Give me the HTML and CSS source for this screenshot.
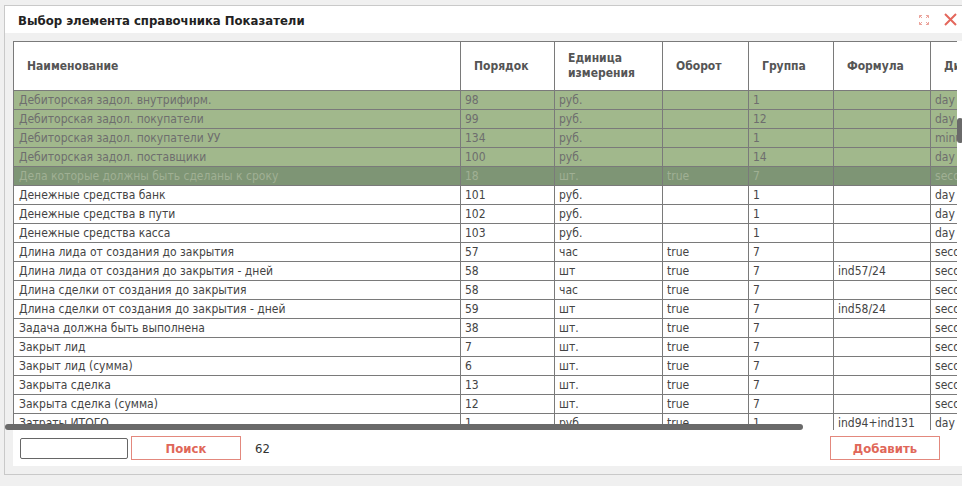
FILE: index.html
```html
<!DOCTYPE html>
<html lang="ru">
<head>
<meta charset="utf-8">
<title>Выбор элемента справочника Показатели</title>
<link rel="stylesheet" href="styles.css">
</head>
<body>
<div class="dialog">
  <div class="titlebar">
    <div class="title">Выбор элемента справочника Показатели</div>
    <div class="tools">
      <svg class="ico-expand" width="12" height="12" viewBox="0 0 12 12">
        <g fill="none" stroke="#eba39b" stroke-width="1">
          <path d="M1.5 4V1.5H4M1.5 1.5l2.5 2.5"/>
          <path d="M8 1.5h2.5V4M10.5 1.5L8 4"/>
          <path d="M1.5 8v2.5H4M1.5 10.5L4 8"/>
          <path d="M8 10.5h2.5V8M10.5 10.5L8 8"/>
        </g>
      </svg>
      <svg class="ico-close" width="13" height="13" viewBox="0 0 13 13">
        <path d="M1 1L12 12M12 1L1 12" stroke="#e4675c" stroke-width="2" fill="none"/>
      </svg>
    </div>
  </div>
  <div class="body">
    <div class="panel">
      <div class="grid-wrap">
        <table class="grid">
          <colgroup>
            <col class="c1"><col class="c2"><col class="c3"><col class="c4"><col class="c5"><col class="c6"><col class="c7">
          </colgroup>
          <thead>
            <tr>
              <th>Наименование</th>
              <th>Порядок</th>
              <th>Единица<br>измерения</th>
              <th>Оборот</th>
              <th>Группа</th>
              <th>Формула</th>
              <th>Дискретность</th>
            </tr>
          </thead>
          <tbody>
            <tr class="sel"><td>Дебиторская задол. внутрифирм.</td><td>98</td><td>руб.</td><td></td><td>1</td><td></td><td>day</td></tr>
            <tr class="sel"><td>Дебиторская задол. покупатели</td><td>99</td><td>руб.</td><td></td><td>12</td><td></td><td>day</td></tr>
            <tr class="sel"><td>Дебиторская задол. покупатели УУ</td><td>134</td><td>руб.</td><td></td><td>1</td><td></td><td>minute</td></tr>
            <tr class="sel"><td>Дебиторская задол. поставщики</td><td>100</td><td>руб.</td><td></td><td>14</td><td></td><td>day</td></tr>
            <tr class="cur"><td>Дела которые должны быть сделаны к сроку</td><td>18</td><td>шт.</td><td>true</td><td>7</td><td></td><td>second</td></tr>
            <tr><td>Денежные средства банк</td><td>101</td><td>руб.</td><td></td><td>1</td><td></td><td>day</td></tr>
            <tr><td>Денежные средства в пути</td><td>102</td><td>руб.</td><td></td><td>1</td><td></td><td>day</td></tr>
            <tr><td>Денежные средства касса</td><td>103</td><td>руб.</td><td></td><td>1</td><td></td><td>day</td></tr>
            <tr><td>Длина лида от создания до закрытия</td><td>57</td><td>час</td><td>true</td><td>7</td><td></td><td>second</td></tr>
            <tr><td>Длина лида от создания до закрытия - дней</td><td>58</td><td>шт</td><td>true</td><td>7</td><td>ind57/24</td><td>second</td></tr>
            <tr><td>Длина сделки от создания до закрытия</td><td>58</td><td>час</td><td>true</td><td>7</td><td></td><td>second</td></tr>
            <tr><td>Длина сделки от создания до закрытия - дней</td><td>59</td><td>шт</td><td>true</td><td>7</td><td>ind58/24</td><td>second</td></tr>
            <tr><td>Задача должна быть выполнена</td><td>38</td><td>шт.</td><td>true</td><td>7</td><td></td><td>second</td></tr>
            <tr><td>Закрыт лид</td><td>7</td><td>шт.</td><td>true</td><td>7</td><td></td><td>second</td></tr>
            <tr><td>Закрыт лид (сумма)</td><td>6</td><td>шт.</td><td>true</td><td>7</td><td></td><td>second</td></tr>
            <tr><td>Закрыта сделка</td><td>13</td><td>шт.</td><td>true</td><td>7</td><td></td><td>second</td></tr>
            <tr><td>Закрыта сделка (сумма)</td><td>12</td><td>шт.</td><td>true</td><td>7</td><td></td><td>second</td></tr>
            <tr><td>Затраты ИТОГО</td><td>1</td><td>руб.</td><td>true</td><td>1</td><td>ind94+ind131</td><td>day</td></tr>
            <tr><td>Затраты прочие</td><td>2</td><td>руб.</td><td>true</td><td>1</td><td></td><td>day</td></tr>
          </tbody>
        </table>
      </div>
      <div class="vthumb"></div>
      <div class="footer">
        <input class="search-input" type="text">
        <button class="btn">Поиск</button>
        <span class="count">62</span>
        <button class="btn btn-add">Добавить</button>
      </div>
    </div>
    <div class="hthumb"></div>
  </div>
</div>
</body>
</html>
```

FILE: styles.css
```css
html, body {
  margin: 0;
  padding: 0;
  background: #f0f0f0;
  overflow: hidden;
  width: 962px;
  height: 486px;
  font-family: "DejaVu Sans Condensed", "Liberation Sans", sans-serif;
}

.dialog {
  position: relative;
  margin: 5px 0 0 4px;
  width: 960px;
  height: 468px;
  border: 1px solid #c9c9c9;
  background: #f0f0f0;
}

.titlebar {
  height: 27px;
  background: #fff;
  display: flex;
  align-items: center;
  padding: 0 8px 0 13px;
}

.title {
  flex: 1;
  font-weight: bold;
  font-size: 13px;
  color: #222;
  padding-top: 1px;
}

.tools {
  display: flex;
  align-items: center;
  gap: 14px;
}

.ico-expand, .ico-close { display: block; }

.body {
  padding: 8px 0 0 8px;
}

.panel {
  position: relative;
  background: #fff;
  height: 425px;
}

.grid-wrap {
  width: 944px;
  height: 389px;
  overflow: hidden;
}

.grid {
  border-collapse: collapse;
  table-layout: fixed;
  width: 1040px;
  font-size: 12px;
}

.c1 { width: 447px; }
.c2 { width: 94px; }
.c3 { width: 108px; }
.c4 { width: 86px; }
.c5 { width: 85px; }
.c6 { width: 97px; }
.c7 { width: 123px; }

.grid th, .grid td {
  border: 1px solid #7a7a7a;
  text-align: left;
  white-space: nowrap;
  overflow: hidden;
}

.grid thead tr { height: 49px; }
.grid tbody tr { height: 19px; }

.grid th {
  padding: 0 4px 0 13px;
  font-size: 12px;
  font-weight: bold;
  color: #555;
  line-height: 15px;
  background: #fff;
}

.grid td {
  padding: 0 4px 0 4px;
  line-height: 17px;
  color: #444;
}

.grid td:first-child { padding-left: 5px; }

.grid tr.sel td {
  background: #a1b88c;
  color: #6e6e6e;
}

.grid tr.cur td {
  background: #7e9575;
  color: #a0b094;
}

.vthumb {
  position: absolute;
  left: 944px;
  top: 77px;
  width: 6px;
  height: 25px;
  border-radius: 3px;
  background: #6a6a6a;
}

.hthumb {
  position: absolute;
  left: 0;
  top: 418px;
  width: 798px;
  height: 6px;
  border-radius: 3px;
  background: #6a6a6a;
}

.footer {
  height: 36px;
  display: flex;
  align-items: center;
  padding: 0 0 0 7px;
}

.search-input {
  box-sizing: border-box;
  width: 108px;
  height: 21px;
  border: 1px solid #666;
  border-radius: 2px;
  margin: 0;
  padding: 0 3px;
  font: 12px "DejaVu Sans Condensed", "Liberation Sans", sans-serif;
}

.btn {
  box-sizing: border-box;
  width: 110px;
  height: 24px;
  margin: 0 0 0 3px;
  border: 1px solid #e3887d;
  background: #fff;
  color: #e06759;
  font: bold 13px "DejaVu Sans Condensed", "Liberation Sans", sans-serif;
  padding: 0;
}

.count {
  margin-left: 14px;
  font-size: 13px;
  color: #333;
}

.btn-add {
  margin-left: auto;
  margin-right: 25px;
}
```
